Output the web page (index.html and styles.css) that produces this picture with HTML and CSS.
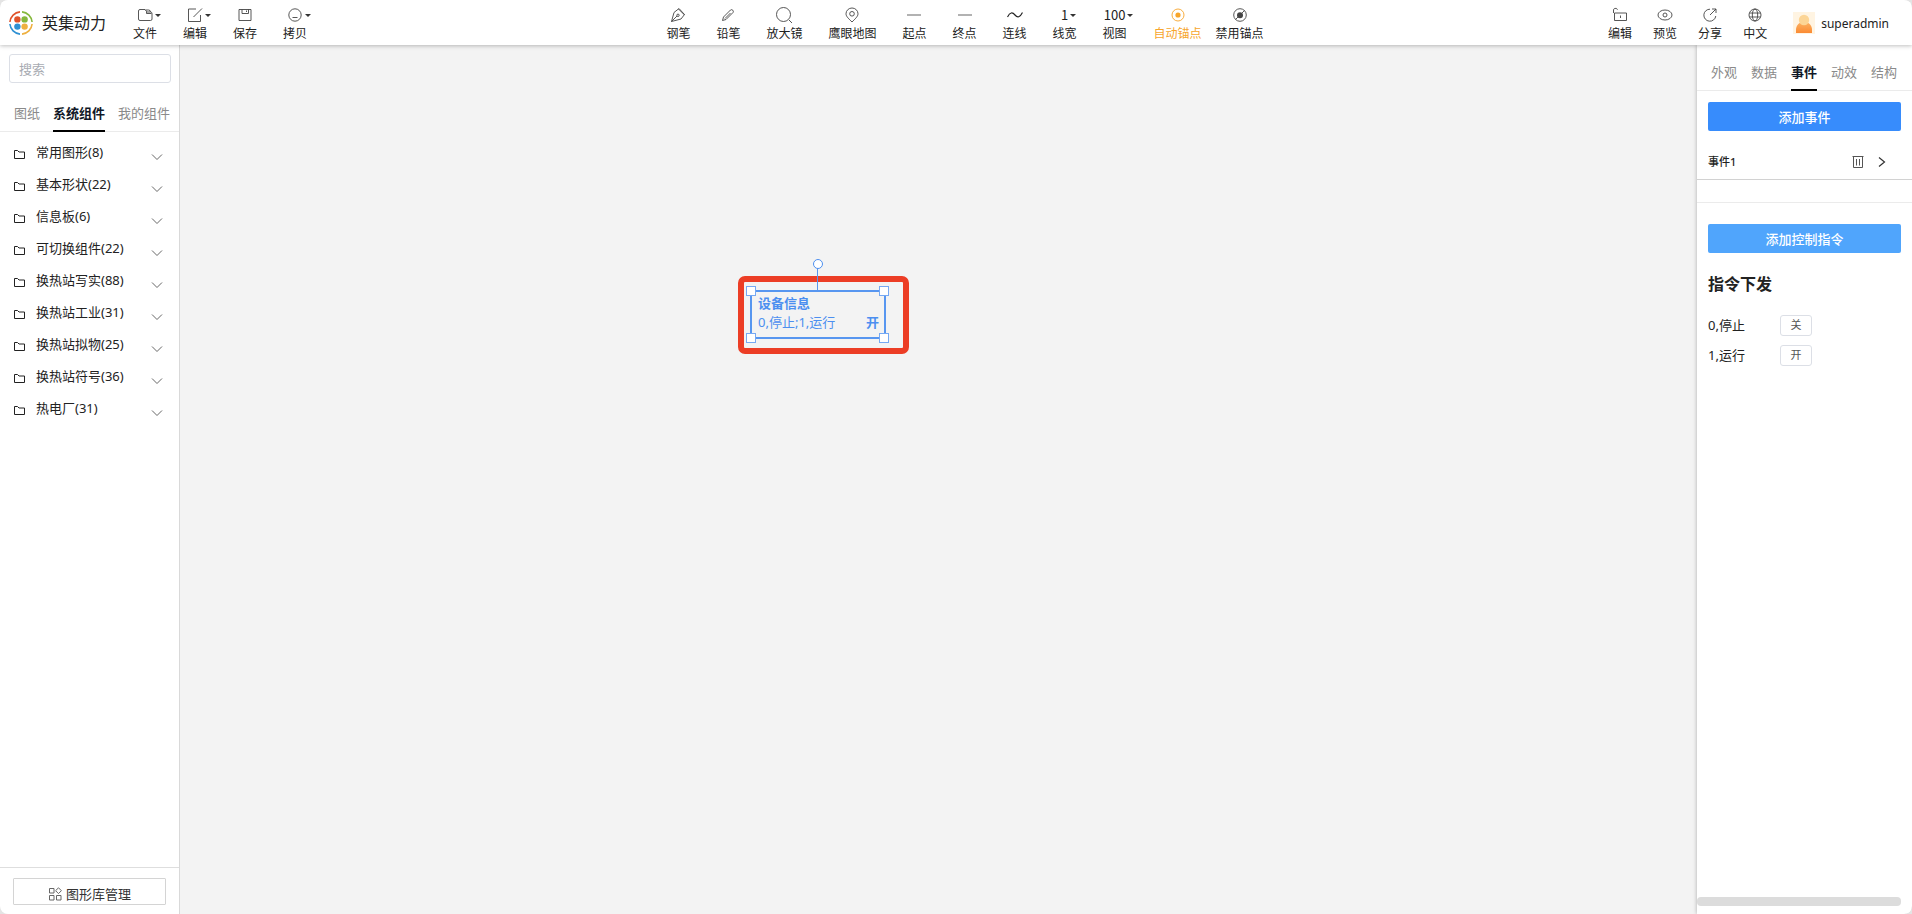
FILE: index.html
```html
<!DOCTYPE html>
<html lang="zh-CN">
<head>
<meta charset="utf-8">
<title>英集动力</title>
<link rel="stylesheet" href="styles.css">
</head>
<body>
<svg class="sprite" aria-hidden="true">
  <symbol id="folder" viewBox="0 0 12 12"><path d="M1.500 2.500h3l1.500 1.500H11.500v6.500h-10z"/></symbol>
  <symbol id="chevron" viewBox="0 0 12 8"><path d="M1 1.500l5 5 5-5"/></symbol>
</svg>
<div class="app">
  <header class="header">
    <div class="header-left">
      <svg class="logo" viewBox="0 0 24 24">
        <g fill="none" stroke-width="1.6">
          <path stroke="#e0532a" d="M.9 11A11.1 11.1 0 0 1 11 .9"/>
          <path stroke="#85b83c" d="M13 .9A11.1 11.1 0 0 1 23.1 11"/>
          <path stroke="#eeb040" d="M23.1 13A11.1 11.1 0 0 1 13 23.1"/>
          <path stroke="#3091d3" d="M11 23.1A11.1 11.1 0 0 1 .9 13"/>
        </g>
        <circle cx="8.4" cy="8.4" r="3.2" fill="#e0532a"/>
        <circle cx="15.6" cy="8.4" r="3.2" fill="#85b83c"/>
        <circle cx="8.4" cy="15.6" r="3.2" fill="#3091d3"/>
        <circle cx="15.6" cy="15.6" r="3.2" fill="#eeb040"/>
      </svg>
      <span class="brand">英集动力</span>
      <nav class="tools">
        <button class="tool"><span class="tool-icon"><svg viewBox="0 0 16 16"><path d="M3 2.500h5l2 2.500h3.500a1.500 1.500 0 0 1 1.500 1.500V12a1.500 1.500 0 0 1-1.500 1.500H3A1.500 1.500 0 0 1 1.500 12V4A1.500 1.500 0 0 1 3 2.500zM8.500 3h3a2 2 0 0 1 2 2M9.500 5v1.500h5"/></svg><i class="caret"></i></span>文件</button>
        <button class="tool"><span class="tool-icon"><svg viewBox="0 0 16 16"><path d="M9 2H1.500v12.500h12V8"/><path d="M6.500 10L15 1.500"/></svg><i class="caret"></i></span>编辑</button>
        <button class="tool"><span class="tool-icon"><svg viewBox="0 0 16 16"><path d="M2 2.500h12v11H2zM5 2.500v4h6.500v-4M9.500 3.500v1.500"/></svg></span>保存</button>
        <button class="tool"><span class="tool-icon"><svg viewBox="0 0 16 16"><circle cx="8" cy="8" r="6.2"/><path d="M5.500 10.500h5"/></svg><i class="caret"></i></span>拷贝</button>
      </nav>
    </div>
    <nav class="tools tools-main">
      <button class="tool"><span class="tool-icon"><svg viewBox="0 0 16 16"><path d="M1.500 14.500L4 5.500l5-4 5.500 6-3.500 4.500zM8.500 2l6 6M1.500 14.500L7 9"/><circle cx="8" cy="8.300" r="1.200"/></svg></span>钢笔</button>
      <button class="tool"><span class="tool-icon"><svg viewBox="0 0 16 16"><path d="M3.500 10L10.500 3a1.800 1.800 0 0 1 2.500 2.500L6 12.500l-3.500 1zM5 11.500l5.500-5.500"/></svg></span>铅笔</button>
      <button class="tool"><span class="tool-icon"><svg class="large" viewBox="0 0 18 18"><circle cx="8.500" cy="8.500" r="7"/><path d="M14 14l3 3"/></svg></span>放大镜</button>
      <button class="tool"><span class="tool-icon"><svg viewBox="0 0 16 16"><path d="M8 15C5 12 2 9.500 2 6.800a6 5.800 0 0 1 12 0C14 9.500 11 12 8 15z"/><circle cx="8" cy="6.800" r="2.300"/></svg></span>鹰眼地图</button>
      <button class="tool"><span class="tool-icon"><svg viewBox="0 0 16 16"><path stroke="#888" stroke-width="1.300" d="M1 8h14"/></svg></span>起点</button>
      <button class="tool"><span class="tool-icon"><svg viewBox="0 0 16 16"><path stroke="#888" stroke-width="1.300" d="M1 8h14"/></svg></span>终点</button>
      <button class="tool"><span class="tool-icon"><svg viewBox="0 0 16 16"><path class="solid" d="M.5 10C3 5 5.500 5 8 8s5 2.500 7.500-2.500"/></svg></span>连线</button>
      <button class="tool"><span class="tool-icon tool-value">1<i class="caret"></i></span>线宽</button>
      <button class="tool"><span class="tool-icon tool-value">100<i class="caret"></i></span>视图</button>
      <span class="anchor-tools">
        <button class="tool active"><span class="tool-icon"><svg viewBox="0 0 16 16"><circle cx="8" cy="8" r="6"/><circle class="dot" cx="8" cy="8" r="2.600"/></svg></span>自动锚点</button>
        <button class="tool"><span class="tool-icon"><svg viewBox="0 0 16 16"><circle cx="8" cy="8" r="6.300"/><circle class="dot" cx="8" cy="8.300" r="3"/><path d="M3.500 12.500l9-9"/></svg></span>禁用锚点</button>
      </span>
    </nav>
    <div class="header-right">
      <nav class="tools tools-end">
        <button class="tool"><span class="tool-icon"><svg viewBox="0 0 16 16"><path d="M2.500 6h12v7.500h-12zM1.500 6V4a2 2 0 0 1 4-1.200M8.500 8.500v2.500"/></svg></span>编辑</button>
        <button class="tool"><span class="tool-icon"><svg viewBox="0 0 16 16"><ellipse cx="8" cy="8" rx="7" ry="5"/><circle cx="8" cy="8" r="2"/></svg></span>预览</button>
        <button class="tool"><span class="tool-icon"><svg viewBox="0 0 16 16"><path d="M8 2.200A6 6 0 1 0 13.800 9M8 8l6-6M10 2h4v4"/></svg></span>分享</button>
        <button class="tool"><span class="tool-icon"><svg viewBox="0 0 16 16"><circle cx="8" cy="8" r="6"/><ellipse cx="8" cy="8" rx="2.700" ry="6"/><path d="M2.500 6h11M2.500 10h11"/></svg></span>中文</button>
      </nav>
      <svg class="avatar" viewBox="0 0 22 22">
        <defs><linearGradient id="coat" x1="0" y1="0" x2="0" y2="1"><stop offset="0" stop-color="#fbb264"/><stop offset="1" stop-color="#fb8b33"/></linearGradient></defs>
        <path fill="#fff4e2" d="M0 0h22v22H0z"/>
        <path fill="url(#coat)" d="M3 21v-3c0-4.500 3-8 8-8s8 3.500 8 8v3z"/>
        <circle cx="11" cy="8" r="5.200" fill="#fcd596"/>
      </svg>
      <span class="user">superadmin</span>
    </div>
  </header>
  <div class="body">
    <aside class="sidebar">
      <div class="search"><input type="text" placeholder="搜索" aria-label="搜索"></div>
      <div class="tabs" role="tablist">
        <button class="tab" role="tab">图纸</button>
        <button class="tab selected" role="tab" aria-selected="true">系统组件</button>
        <button class="tab" role="tab">我的组件</button>
      </div>
      <div class="tree">
        <button class="group"><svg class="folder"><use href="#folder"/></svg><span>常用图形(8)</span><svg class="chevron"><use href="#chevron"/></svg></button>
        <button class="group"><svg class="folder"><use href="#folder"/></svg><span>基本形状(22)</span><svg class="chevron"><use href="#chevron"/></svg></button>
        <button class="group"><svg class="folder"><use href="#folder"/></svg><span>信息板(6)</span><svg class="chevron"><use href="#chevron"/></svg></button>
        <button class="group"><svg class="folder"><use href="#folder"/></svg><span>可切换组件(22)</span><svg class="chevron"><use href="#chevron"/></svg></button>
        <button class="group"><svg class="folder"><use href="#folder"/></svg><span>换热站写实(88)</span><svg class="chevron"><use href="#chevron"/></svg></button>
        <button class="group"><svg class="folder"><use href="#folder"/></svg><span>换热站工业(31)</span><svg class="chevron"><use href="#chevron"/></svg></button>
        <button class="group"><svg class="folder"><use href="#folder"/></svg><span>换热站拟物(25)</span><svg class="chevron"><use href="#chevron"/></svg></button>
        <button class="group"><svg class="folder"><use href="#folder"/></svg><span>换热站符号(36)</span><svg class="chevron"><use href="#chevron"/></svg></button>
        <button class="group"><svg class="folder"><use href="#folder"/></svg><span>热电厂(31)</span><svg class="chevron"><use href="#chevron"/></svg></button>
      </div>
      <div class="sidebar-footer">
        <button class="library"><svg viewBox="0 0 14 14"><path d="M1.500 1.500h4.500v4.500h-4.500zM1.500 8.500h4.500v4.500h-4.500zM8.500 8.500h4.500v4.500h-4.500zM10.500 .8l2.900 2.900-2.900 2.900-2.900-2.900z"/></svg>图形库管理</button>
      </div>
    </aside>
    <main class="canvas">
      <div class="callout"></div>
      <div class="rotate-line"></div>
      <div class="rotate-knob"></div>
      <div class="node">
        <div class="node-title">设备信息</div>
        <div class="node-row"><span>0,停止;1,运行</span><b>开</b></div>
        <i class="handle top left"></i><i class="handle top right"></i>
        <i class="handle bottom left"></i><i class="handle bottom right"></i>
      </div>
    </main>
    <aside class="panel">
      <div class="tabs panel-tabs" role="tablist">
        <button class="tab" role="tab">外观</button>
        <button class="tab" role="tab">数据</button>
        <button class="tab selected" role="tab" aria-selected="true">事件</button>
        <button class="tab" role="tab">动效</button>
        <button class="tab" role="tab">结构</button>
      </div>
      <div class="section"><button class="primary">添加事件</button></div>
      <div class="event">
        <span class="event-name">事件1</span>
        <button class="icon-button" aria-label="删除"><svg class="trash" viewBox="0 0 12 14"><path d="M1.500 1.500h9v11h-9zM.5 1.500h11M4.500 4v6.500M7.500 4v6.500"/></svg></button>
        <button class="icon-button" aria-label="展开"><svg class="arrow" viewBox="0 0 8 12"><path d="M1 1.500L6.500 6 1 10.500"/></svg></button>
      </div>
      <div class="divider"></div>
      <div class="section commands">
        <button class="primary light">添加控制指令</button>
        <h2 class="heading">指令下发</h2>
        <div class="command"><label for="cmd-off">0,停止</label><button class="small" id="cmd-off">关</button></div>
        <div class="command"><label for="cmd-on">1,运行</label><button class="small" id="cmd-on">开</button></div>
      </div>
      <div class="scrollbar"></div>
    </aside>
  </div>
</div>
</body>
</html>
```
FILE: styles.css
```css
* { box-sizing: border-box; }

body {
  margin: 0;
  background: #e4e4e4;
  color: #222;
  font: 13px/20px "Noto Sans", "Noto Sans CJK SC", sans-serif;
}

button {
  margin: 0;
  padding: 0;
  border: 0;
  background: none;
  color: inherit;
  font: inherit;
  cursor: pointer;
}

svg { fill: none; stroke: currentColor; stroke-width: 1; flex: none; }
.sprite { display: none; }

.app {
  display: flex;
  flex-direction: column;
  height: 100vh;
  border-radius: 8px;
  overflow: hidden;
  background: #fff;
}

/* Header */
.header {
  position: relative;
  z-index: 1;
  display: flex;
  flex: none;
  height: 45px;
  background: #fff;
  box-shadow: 0 1px 4px rgba(0, 0, 0, .25);
}
.header-left, .header-right { display: flex; flex: 1; align-items: center; }
.header-left { padding-left: 9px; }
.header-right { justify-content: flex-end; padding-right: 23px; }
.logo { width: 24px; height: 24px; stroke: none; }
.brand { margin: 0 27px 0 9px; font-size: 16px; line-height: 24px; }
.tools { display: flex; align-items: center; gap: 26px; padding-top: 2px; }
.tools-main { padding-left: 32px; }
.tools-end { gap: 21px; margin-right: 26px; }
.anchor-tools { display: flex; gap: 14px; margin-left: 1px; }
.tool {
  display: flex;
  flex-direction: column;
  align-items: center;
  font-size: 12px;
  line-height: 18px;
  white-space: nowrap;
}
.tool-icon {
  position: relative;
  display: flex;
  align-items: center;
  justify-content: center;
  height: 20px;
  color: #444;
}
.tool-icon svg { width: 16px; height: 16px; stroke-width: .9; }
.tool-icon svg.large { width: 18px; height: 18px; }
.tool-icon .solid { stroke: #222; stroke-width: 1.2; }
.tool-icon .dot { fill: currentColor; stroke: none; }
.tool-value { font-family: "Noto Sans CJK SC", sans-serif; font-size: 13px; color: #222; }
.tool.active, .tool.active .tool-icon { color: #f7a52b; }
.caret {
  position: absolute;
  left: 100%;
  top: 9px;
  margin-left: 2px;
  border: 3px solid transparent;
  border-top-color: #333;
  border-bottom: 0;
}
.avatar { width: 22px; height: 22px; stroke: none; }
.user { margin-left: 6px; padding-top: 2px; font-size: 12px; }

/* Columns */
.body { display: flex; flex: 1; min-height: 0; }
.sidebar {
  display: flex;
  flex-direction: column;
  flex: none;
  width: 180px;
  border-right: 1px solid #d9d9d9;
}
.search { padding: 9px 8px 8px 9px; }
.search input {
  display: block;
  width: 100%;
  height: 29px;
  padding: 0 9px;
  border: 1px solid #dcdfe6;
  border-radius: 3px;
  font: inherit;
  color: inherit;
}
.search input::placeholder { color: #a8abb2; }

.tabs {
  display: flex;
  gap: 13px;
  margin-top: 5px;
  padding: 0 14px;
  border-bottom: 1px solid #ebebeb;
}
.tab {
  height: 36px;
  margin-bottom: -1px;
  border-bottom: 2px solid transparent;
  color: #8a8a8a;
  white-space: nowrap;
}
.tab.selected { border-color: #000; color: #111827; font-weight: 700; }

.tree { flex: 1; padding-top: 6px; }
.group {
  display: flex;
  align-items: center;
  width: 100%;
  height: 32px;
  padding: 0 16px 0 13px;
  text-align: left;
}
.group span { flex: 1; padding-bottom: 4px; }
.folder { width: 12px; height: 12px; margin: 0 11px 0 0; color: #222; }
.chevron { width: 12px; height: 8px; margin-top: 5px; color: #666; }

.sidebar-footer { padding: 10px 13px 9px; border-top: 1px solid #dedede; }
.library {
  display: flex;
  align-items: center;
  justify-content: center;
  gap: 4px;
  width: 100%;
  height: 27px;
  padding-top: 4px;
  border: 1px solid #d4d4d4;
  border-radius: 1px;
  color: #333;
}
.library svg { width: 14px; height: 14px; color: #666; }

/* Canvas */
.canvas { position: relative; flex: 1; background: #f3f3f3; overflow: hidden; }
.callout {
  position: absolute;
  left: 558px;
  top: 231px;
  width: 171px;
  height: 78px;
  border: 6px solid #ec3d25;
  border-radius: 7px;
}
.node {
  position: absolute;
  left: 570px;
  top: 245px;
  width: 136px;
  height: 49px;
  padding: 2px 5px 0 6px;
  border: 2px solid #5796f0;
  color: #4c8ff0;
  line-height: 19px;
}
.node-title { font-weight: 700; }
.node-row { display: flex; justify-content: space-between; }
.handle {
  position: absolute;
  width: 10px;
  height: 10px;
  border: 1px solid #76a9f3;
  background: #fff;
}
.handle.top { top: -6px; }
.handle.bottom { bottom: -6px; }
.handle.left { left: -6px; }
.handle.right { right: -5px; }
.rotate-line { position: absolute; left: 637px; top: 223px; width: 1px; height: 23px; background: #5796f0; }
.rotate-knob {
  position: absolute;
  left: 633px;
  top: 214px;
  width: 10px;
  height: 10px;
  border: 1px solid #4c8ff0;
  border-radius: 50%;
  background: #fff;
}

/* Property panel */
.panel {
  position: relative;
  display: flex;
  flex-direction: column;
  flex: none;
  width: 215px;
  background: #fff;
  box-shadow: 0 0 4px rgba(0, 0, 0, .3);
}
.panel-tabs { gap: 14px; margin-top: 10px; }
.section { padding: 11px 11px 0; }
.primary {
  display: block;
  width: 100%;
  height: 29px;
  border-radius: 2px;
  background: #378cfc;
  color: #fff;
  font-weight: 500;
}
.primary.light { background: #50a5fc; }
.event {
  display: flex;
  align-items: center;
  gap: 14px;
  height: 49px;
  padding: 14px 26px 0 11px;
  border-bottom: 1px solid #d2d2d2;
}
.event-name { flex: 1; font-size: 11px; font-weight: 500; }
.icon-button { display: flex; color: #333; }
.trash { width: 12px; height: 14px; color: #555; }
.arrow { width: 8px; height: 12px; stroke-width: 1.2; }
.divider { height: 23px; border-bottom: 1px solid #ebebeb; }
.commands { flex: 1; padding-top: 21px; }
.heading { margin: 19px 0 14px; font-size: 16px; line-height: 24px; }
.command { display: flex; align-items: center; height: 30px; }
.command label { width: 72px; }
.small {
  width: 32px;
  height: 21px;
  border: 1px solid #dcdfe6;
  border-radius: 3px;
  color: #555;
  font-size: 11px;
  line-height: 18px;
}
.scrollbar { height: 9px; margin: 0 11px 8px 0; border-radius: 4px; background: #dcdcdc; }
```
